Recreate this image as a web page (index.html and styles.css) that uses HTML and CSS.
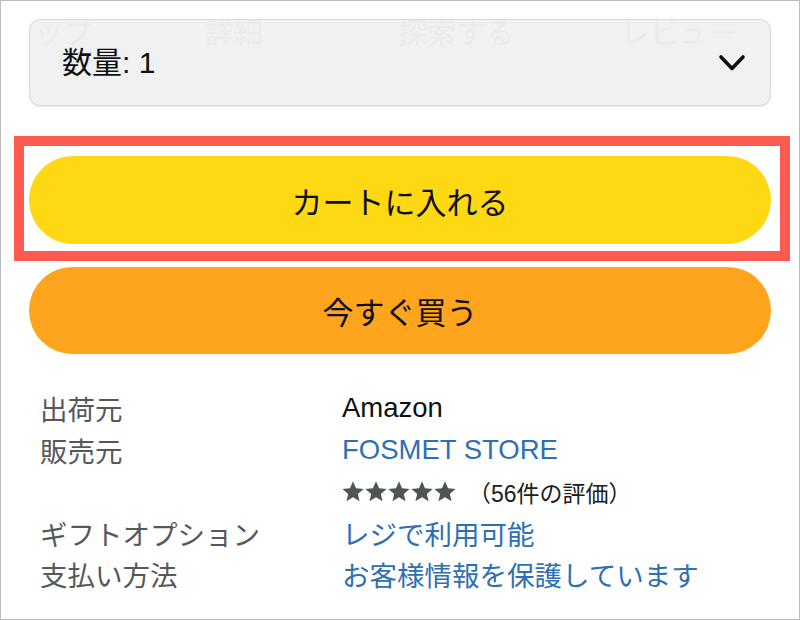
FILE: index.html
```html
<!DOCTYPE html>
<html lang="ja">
<head>
  <meta charset="UTF-8">
  <title>カートに入れる</title>
  <link rel="stylesheet" href="styles.css">
</head>
<body>

  <div class="pagina">

    <!-- Seletor de quantidade (com as abas apagadas atrás) -->
    <div class="quantidade">
      <div class="abasFantasma">
        <span>トップ</span>
        <span>詳細</span>
        <span>探索する</span>
        <span>レビュー</span>
      </div>
      <span class="quantidadeTexto">数量: 1</span>
      <svg class="chevron" width="28" height="18" viewBox="0 0 28 18">
        <polyline points="3,3 14,14.5 25,3" fill="none" stroke="#0f1111" stroke-width="3.6" stroke-linecap="round" stroke-linejoin="round"/>
      </svg>
    </div>

    <div class="destaque">
      <button class="botao botaoCarrinho">カートに入れる</button>
      <span class="moldura"></span>
    </div>

    <button class="botao botaoComprar">今すぐ買う</button>

    <div class="detalhes">
      <span class="rotulo">出荷元</span>
      <span class="valor">Amazon</span>

      <span class="rotulo">販売元</span>
      <a class="valor link">FOSMET STORE</a>

      <span class="rotulo"></span>
      <span class="valor avaliacao">
        <svg class="estrelas" width="116" height="22" viewBox="0 0 116 22">
          <defs>
            <path id="estrela" d="M11 0.3l3 7 7.6 0.6-5.8 5 1.8 7.4-6.6-4-6.6 4 1.8-7.4-5.8-5 7.6-0.6z"/>
          </defs>
          <g fill="#4f5454">
            <use href="#estrela" x="0" y="0"/>
            <use href="#estrela" x="23" y="0"/>
            <use href="#estrela" x="46" y="0"/>
            <use href="#estrela" x="69" y="0"/>
            <use href="#estrela" x="92" y="0"/>
          </g>
        </svg>
        <span class="totalAvaliacoes">（56件の評価）</span>
      </span>

      <span class="rotulo">ギフトオプション</span>
      <a class="valor link">レジで利用可能</a>

      <span class="rotulo">支払い方法</span>
      <a class="valor link">お客様情報を保護しています</a>
    </div>

  </div>

</body>
</html>
```

FILE: styles.css
```css
body {
  margin: 0;
  padding: 0;
  background: #ffffff;
  font-family: "Liberation Sans", "Noto Sans CJK JP", sans-serif;
  color: #0f1111;
}

.pagina {
  width: 800px;
  height: 620px;
  box-sizing: border-box;
  border: 1px solid #bcbcbc;
  padding: 18px 28px 0 28px;
  overflow: hidden;
}

/* seletor de quantidade */
.quantidade {
  position: relative;
  height: 87px;
  box-sizing: border-box;
  background: #f0f2f2;
  border: 1px solid #d5d9d9;
  border-radius: 11px;
  box-shadow: 0 1px 1px rgba(15, 17, 17, 0.08);
  display: flex;
  align-items: center;
  justify-content: space-between;
  padding: 0 24px 0 32px;
  overflow: hidden;
}

.abasFantasma {
  position: absolute;
  left: -25px;
  top: -7px;
  display: flex;
  font-family: "Noto Sans CJK JP", sans-serif;
  font-size: 29px;
  line-height: 36px;
  color: #eaecec;
  white-space: nowrap;
}

.abasFantasma span:nth-child(2) { margin-left: 113px; }
.abasFantasma span:nth-child(3) { margin-left: 135px; }
.abasFantasma span:nth-child(4) { margin-left: 107px; }

.quantidadeTexto {
  position: relative;
  font-size: 30px;
  line-height: 1;
}

.chevron {
  position: relative;
  display: block;
}

/* botões */
.destaque {
  position: relative;
  margin-top: 50px;
}

.botao {
  display: block;
  width: 100%;
  border: none;
  border-radius: 44px;
  font-family: "Noto Sans CJK JP", sans-serif;
  font-size: 31px;
  color: #0f1111;
  cursor: pointer;
}

.botaoCarrinho {
  height: 88px;
  background: #fed813;
}

.botaoComprar {
  height: 87px;
  margin-top: 23px;
  background: #fea41d;
}

/* caixa vermelha de destaque */
.moldura {
  position: absolute;
  left: -15px;
  right: -19px;
  top: -20px;
  bottom: -17px;
  border: 10px solid #fe5a4f;
  pointer-events: none;
}

/* detalhes do vendedor */
.detalhes {
  display: grid;
  grid-template-columns: 302px 1fr;
  grid-template-rows: 43px 42px 41px 41px 42px;
  align-items: center;
  margin-top: 32px;
  padding-left: 11px;
  font-size: 27.5px;
}

.rotulo {
  color: #565959;
  white-space: nowrap;
}

.valor {
  color: #0f1111;
  white-space: nowrap;
}

.link {
  color: #2f6fb3;
  text-decoration: none;
}

.avaliacao {
  display: flex;
  align-items: center;
}

.estrelas {
  display: block;
}

.totalAvaliacoes {
  font-size: 23px;
  margin-left: 10px;
  color: #1d2020;
}
```
